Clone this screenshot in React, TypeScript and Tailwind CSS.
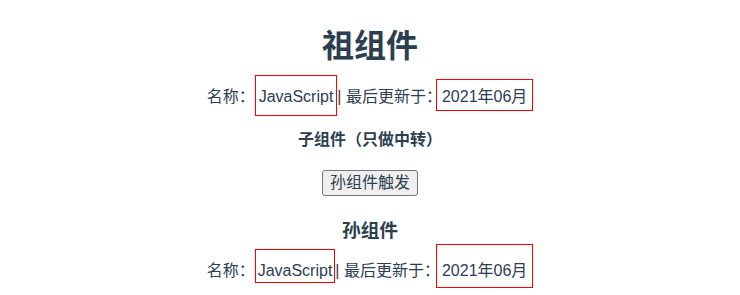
import React from "react";

type Info = { name: string; updated: string };

const info: Info = { name: "JavaScript", updated: "2021年06月" };

// one line of "名称 | 最后更新于", each value sits in a red box
function InfoLine({
  className,
  nameBox,
  dateBox,
}: {
  className: string;
  nameBox: string;
  dateBox: string;
}) {
  return (
    <p className={`text-[16px] leading-6 ${className}`}>
      名称：
      <span className={`border border-[red] ${nameBox}`}>{info.name}</span>|
      最后更新于：
      <span className={`border border-[red] ${dateBox}`}>{info.updated}</span>
    </p>
  );
}

function Grandson() {
  return (
    <div className="flex flex-col items-center">
      <h3 className="mt-[23px] text-[18.72px] font-bold leading-6">孙组件</h3>
      <InfoLine
        className="mt-[16px]"
        nameBox="pt-[12px] pb-[3px] px-[2px]"
        dateBox="-ml-[4px] pt-[17px] pb-[8px] px-[5px]"
      />
    </div>
  );
}

function Son() {
  return (
    <div className="flex flex-col items-center">
      <h4 className="mt-[19px] text-[16px] font-bold leading-6">子组件（只做中转）</h4>
      <button className="mt-[18px] h-[26px] px-[7px] border border-[#767676] rounded-[3px] bg-[#efefef] text-[16px] leading-none text-[#2c3e50]">
        孙组件触发
      </button>
      <Grandson />
    </div>
  );
}

export default function App() {
  return (
    <div className="flex flex-col items-center min-h-screen pt-[26px] pb-[16px] text-center text-[#2c3e50] font-['Liberation_Sans','Noto_Sans_CJK_SC',sans-serif]">
      <h1 className="text-[32px] font-bold leading-10">祖组件</h1>
      <InfoLine
        className="mt-[19px]"
        nameBox="pt-[12px] pb-[10px] px-[3px]"
        dateBox="-ml-[6px] pt-[8px] pb-[5px] px-[5px]"
      />
      <Son />
    </div>
  );
}
